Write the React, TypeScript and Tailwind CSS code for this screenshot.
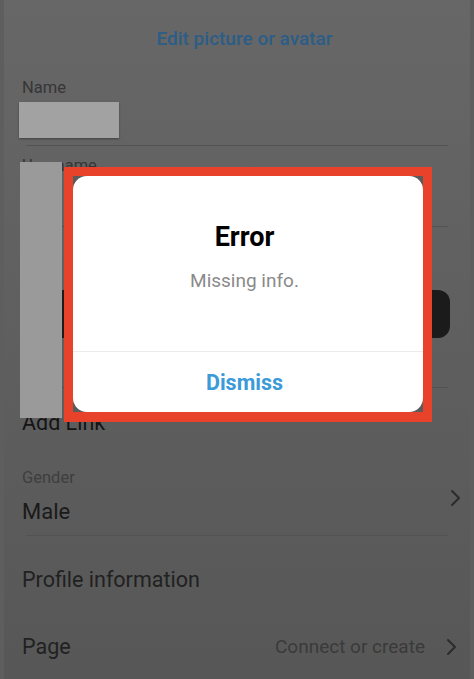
import React from 'react';

const Chevron = () => (
    <svg width="12" height="18" viewBox="0 0 12 18" fill="none">
        <path d="M3 2l7 7-7 7" stroke="#2b2b2b" strokeWidth="2" strokeLinecap="round" strokeLinejoin="round" />
    </svg>
);

const Divider = () => <div className="mx-[22px] h-px bg-[#535353]" />;

export default function App() {
    return (
        <div
            className="relative h-[679px] w-full overflow-hidden bg-gradient-to-b from-[#676767] to-[#575757] border-x-[4px] border-[#5e5e5e]"
            style={{ fontFamily: 'Roboto, "Noto Sans", sans-serif' }}
        >
            {/* page behind the dim */}
            <div className="flex flex-col">
                <div className="pt-[27px] pl-[15px] text-center text-[19px] leading-[24px] font-medium text-[#2c5d86]">
                    Edit picture or avatar
                </div>

                <div className="px-[18px] pt-[28px]">
                    <div className="text-[16.5px] leading-[18px] text-[#363636]">Name</div>
                    <div className="mt-[5px] -ml-[3px] h-[36px] w-[100px] bg-[#a2a2a2] shadow-[0_1px_2px_rgba(0,0,0,0.35)]" />
                </div>
                <div className="mt-[7px]">
                    <Divider />
                </div>

                <div className="flex h-[80px] flex-col px-[18px] pt-[11px]">
                    <div className="text-[16.5px] leading-[18px] text-[#363636]">Username</div>
                </div>
                <Divider />
                <div className="h-[79px]" />
                <Divider />
                <div className="h-[80px]" />
                <Divider />

                <div className="px-[18px] pt-[22px] text-[21.5px] leading-[26px] text-[#141414]">Add Link</div>

                <div className="flex items-center justify-between px-[18px] pr-[9px] pt-[33px] pb-[9px]">
                    <div className="flex flex-col">
                        <div className="text-[16.5px] leading-[18px] text-[#3e3e3e]">Gender</div>
                        <div className="mt-[11px] text-[22px] leading-[28px] text-[#1a1a1a]">Male</div>
                    </div>
                    <Chevron />
                </div>
                <Divider />

                <div className="px-[18px] pt-[30px] text-[21.5px] leading-[28px] text-[#212121]">Profile information</div>

                <div className="flex items-center justify-between px-[18px] pr-[13px] pt-[39px]">
                    <div className="text-[21.5px] leading-[28px] text-[#212121]">Page</div>
                    <div className="flex items-center gap-[20px]">
                        <span className="text-[19px] leading-[24px] text-[#3a3a3a]">Connect or create</span>
                        <Chevron />
                    </div>
                </div>
            </div>

            {/* dark button partly hidden behind the dialog */}
            <div className="absolute left-[40px] top-[290px] h-[48px] w-[406px] rounded-[12px] bg-[#1b1b1b]" />

            {/* redaction block */}
            <div className="absolute left-[16px] top-[162px] h-[256px] w-[42px] bg-[#9a9a9a]" />

            {/* highlighted error dialog */}
            <div className="absolute left-[60px] top-[167px] h-[255px] w-[368px] border-[9px] border-b-[10px] border-[#e8432a] bg-[#5b5b5b]">
                <div className="flex h-full w-full flex-col rounded-[14px] bg-white pr-[7px]">
                    <div className="pt-[45px] text-center text-[27px] leading-[32px] font-bold text-black">Error</div>
                    <div className="mt-[16px] text-center text-[19px] leading-[24px] text-[#8a8a8a]">Missing info.</div>
                    <div className="mt-auto -mr-[7px] h-px bg-[#ececec]" />
                    <div className="flex h-[60px] items-center justify-center pt-[3px] text-[21.5px] font-bold text-[#3b9ad8]">
                        Dismiss
                    </div>
                </div>
            </div>
        </div>
    );
}
